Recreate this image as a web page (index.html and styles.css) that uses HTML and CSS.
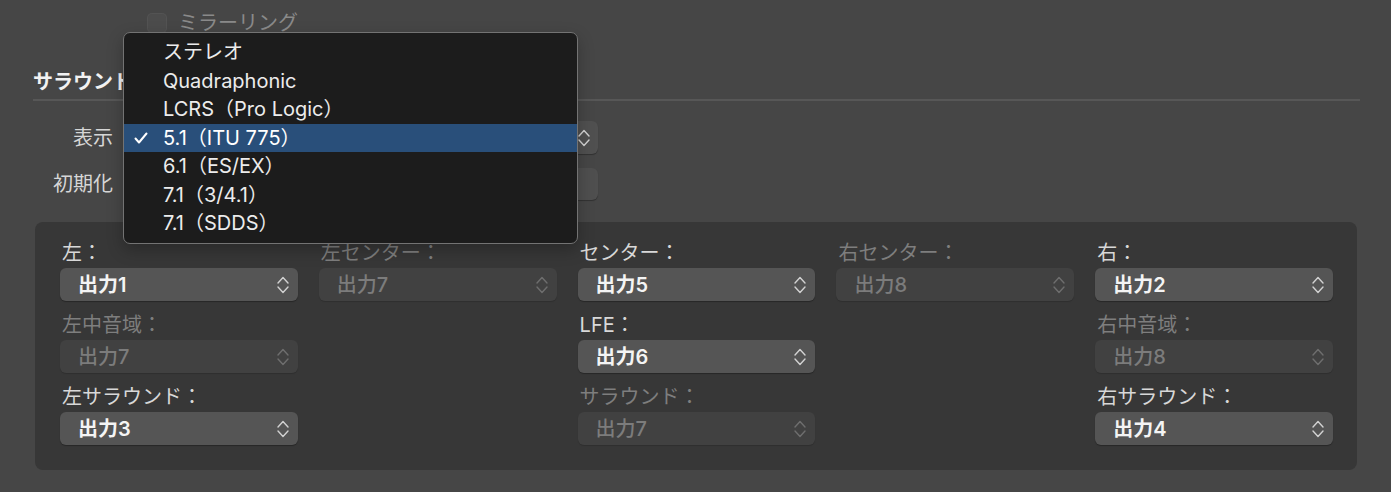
FILE: index.html
```html
<!DOCTYPE html>
<html lang="ja">
<head>
<meta charset="utf-8">
<title>サラウンド</title>
<link rel="stylesheet" href="styles.css">
</head>
<body>
<div class="page">
  <div class="mirror-row">
    <span class="checkbox"></span>
    <span class="mirror-label">ミラーリング</span>
  </div>

  <div class="section-head">サラウンド</div>

  <div class="form-rows">
    <div class="form-row">
      <span class="form-label">表示</span>
      <div class="popup top-popup" aria-label="5.1（ITU 775）">
        <span class="popup-text"></span>
        <svg class="chev" viewBox="0 0 12 18" width="12" height="18"><polyline points="1,7 6,1.5 11,7"/><polyline points="1,11 6,16.5 11,11"/></svg>
      </div>
    </div>
    <div class="form-row">
      <span class="form-label">初期化</span>
      <button class="push" type="button" aria-label="初期化"></button>
    </div>
  </div>

  <div class="group">
    <div class="cell">
      <div class="cell-label">左：</div>
      <div class="popup"><span class="popup-text">出力1</span><svg class="chev" viewBox="0 0 12 18" width="12" height="18"><polyline points="1,7 6,1.5 11,7"/><polyline points="1,11 6,16.5 11,11"/></svg></div>
    </div>
    <div class="cell off">
      <div class="cell-label">左センター：</div>
      <div class="popup"><span class="popup-text">出力7</span><svg class="chev" viewBox="0 0 12 18" width="12" height="18"><polyline points="1,7 6,1.5 11,7"/><polyline points="1,11 6,16.5 11,11"/></svg></div>
    </div>
    <div class="cell">
      <div class="cell-label">センター：</div>
      <div class="popup"><span class="popup-text">出力5</span><svg class="chev" viewBox="0 0 12 18" width="12" height="18"><polyline points="1,7 6,1.5 11,7"/><polyline points="1,11 6,16.5 11,11"/></svg></div>
    </div>
    <div class="cell off">
      <div class="cell-label">右センター：</div>
      <div class="popup"><span class="popup-text">出力8</span><svg class="chev" viewBox="0 0 12 18" width="12" height="18"><polyline points="1,7 6,1.5 11,7"/><polyline points="1,11 6,16.5 11,11"/></svg></div>
    </div>
    <div class="cell">
      <div class="cell-label">右：</div>
      <div class="popup"><span class="popup-text">出力2</span><svg class="chev" viewBox="0 0 12 18" width="12" height="18"><polyline points="1,7 6,1.5 11,7"/><polyline points="1,11 6,16.5 11,11"/></svg></div>
    </div>

    <div class="cell off">
      <div class="cell-label">左中音域：</div>
      <div class="popup"><span class="popup-text">出力7</span><svg class="chev" viewBox="0 0 12 18" width="12" height="18"><polyline points="1,7 6,1.5 11,7"/><polyline points="1,11 6,16.5 11,11"/></svg></div>
    </div>
    <div class="cell empty"></div>
    <div class="cell">
      <div class="cell-label">LFE：</div>
      <div class="popup"><span class="popup-text">出力6</span><svg class="chev" viewBox="0 0 12 18" width="12" height="18"><polyline points="1,7 6,1.5 11,7"/><polyline points="1,11 6,16.5 11,11"/></svg></div>
    </div>
    <div class="cell empty"></div>
    <div class="cell off">
      <div class="cell-label">右中音域：</div>
      <div class="popup"><span class="popup-text">出力8</span><svg class="chev" viewBox="0 0 12 18" width="12" height="18"><polyline points="1,7 6,1.5 11,7"/><polyline points="1,11 6,16.5 11,11"/></svg></div>
    </div>

    <div class="cell">
      <div class="cell-label">左サラウンド：</div>
      <div class="popup"><span class="popup-text">出力3</span><svg class="chev" viewBox="0 0 12 18" width="12" height="18"><polyline points="1,7 6,1.5 11,7"/><polyline points="1,11 6,16.5 11,11"/></svg></div>
    </div>
    <div class="cell empty"></div>
    <div class="cell off">
      <div class="cell-label">サラウンド：</div>
      <div class="popup"><span class="popup-text">出力7</span><svg class="chev" viewBox="0 0 12 18" width="12" height="18"><polyline points="1,7 6,1.5 11,7"/><polyline points="1,11 6,16.5 11,11"/></svg></div>
    </div>
    <div class="cell empty"></div>
    <div class="cell">
      <div class="cell-label">右サラウンド：</div>
      <div class="popup"><span class="popup-text">出力4</span><svg class="chev" viewBox="0 0 12 18" width="12" height="18"><polyline points="1,7 6,1.5 11,7"/><polyline points="1,11 6,16.5 11,11"/></svg></div>
    </div>
  </div>
</div>

<div class="menu" role="menu">
  <div class="item"><span class="check"></span><span>ステレオ</span></div>
  <div class="item"><span class="check"></span><span>Quadraphonic</span></div>
  <div class="item"><span class="check"></span><span>LCRS（Pro Logic）</span></div>
  <div class="item selected"><span class="check"><svg class="tick" viewBox="0 0 14 12" width="14" height="12"><polyline points="1.5,6.5 5,10.5 12.5,1.5"/></svg></span><span>5.1（ITU 775）</span></div>
  <div class="item"><span class="check"></span><span>6.1（ES/EX）</span></div>
  <div class="item"><span class="check"></span><span>7.1（3/4.1）</span></div>
  <div class="item"><span class="check"></span><span>7.1（SDDS）</span></div>
</div>
</body>
</html>
```

FILE: styles.css
```css
* {
  box-sizing: border-box;
}

html, body {
  margin: 0;
  padding: 0;
}

body {
  width: 1391px;
  height: 492px;
  overflow: hidden;
  position: relative;
  background: #464646;
  font-family: "Inter", "Noto Sans CJK JP", sans-serif;
  font-size: 20px;
  line-height: 24px;
  color: #e6e6e6;
}

.page {
  padding-top: 11px;
}

.mirror-row {
  display: flex;
  align-items: center;
  gap: 11px;
  margin-left: 147px;
  height: 24px;
  color: #8a8a8a;
}

.checkbox {
  width: 20px;
  height: 20px;
  border-radius: 5px;
  background: #4c4c4c;
  box-shadow: inset 0 0 0 1px #535353;
}

.section-head {
  margin: 35px 31px 0 33px;
  padding-bottom: 5px;
  border-bottom: 2px solid #575757;
  font-weight: 600;
  color: #f2f2f2;
}

.form-rows {
  display: flex;
  flex-direction: column;
  gap: 14px;
  margin: 20px 0 0 33px;
}

.form-row {
  display: flex;
  align-items: center;
  gap: 11px;
}

.form-label {
  width: 80px;
  text-align: right;
  color: #d6d6d6;
}

.popup {
  height: 33px;
  border-radius: 6px;
  background: #555555;
  display: flex;
  align-items: center;
  justify-content: space-between;
  padding: 0 9px 0 18px;
  box-shadow: 0 1px 1px rgba(0, 0, 0, 0.3);
  color: #f4f4f4;
  font-weight: 600;
}

.top-popup {
  width: 474px;
  background: #505050;
  padding-right: 8px;
}

.push {
  width: 474px;
  height: 32px;
  border: 0;
  border-radius: 6px;
  background: #4f4f4f;
  box-shadow: 0 1px 1px rgba(0, 0, 0, 0.3);
  padding: 0;
}

.chev {
  flex: none;
  fill: none;
  stroke: #d2d2d2;
  stroke-width: 1.4;
  stroke-linecap: round;
  stroke-linejoin: round;
}

.group {
  margin: 22px 34px 0 35px;
  background: #373737;
  border-radius: 8px;
  padding: 19px 24px 25px 25px;
  display: grid;
  grid-template-columns: repeat(5, 1fr);
  column-gap: 21px;
  row-gap: 12px;
}

.cell {
  display: flex;
  flex-direction: column;
  gap: 3px;
}

.cell-label {
  color: #d8d8d8;
  padding-left: 2px;
}

.cell.off .cell-label {
  color: #7e7e7e;
}

.cell.off .popup {
  background: #414141;
  color: #7c7c7c;
  font-weight: 500;
  box-shadow: 0 1px 1px rgba(0, 0, 0, 0.15);
}

.cell.off .chev {
  stroke: #6e6e6e;
}

.menu {
  position: absolute;
  left: 123px;
  top: 32px;
  width: 455px;
  height: 212px;
  background: #1c1c1c;
  border: 1px solid #737373;
  border-radius: 7px;
  padding: 5px 0 6px;
  box-shadow: 0 6px 16px rgba(0, 0, 0, 0.25);
  color: #ececec;
}

.item {
  display: flex;
  align-items: center;
  height: 28.5px;
}

.item.selected {
  background: #294f7a;
  color: #ffffff;
}

.check {
  width: 39px;
  padding-left: 10px;
  display: flex;
  align-items: center;
}

.tick {
  fill: none;
  stroke: #ffffff;
  stroke-width: 2;
  stroke-linecap: round;
  stroke-linejoin: round;
}
```
